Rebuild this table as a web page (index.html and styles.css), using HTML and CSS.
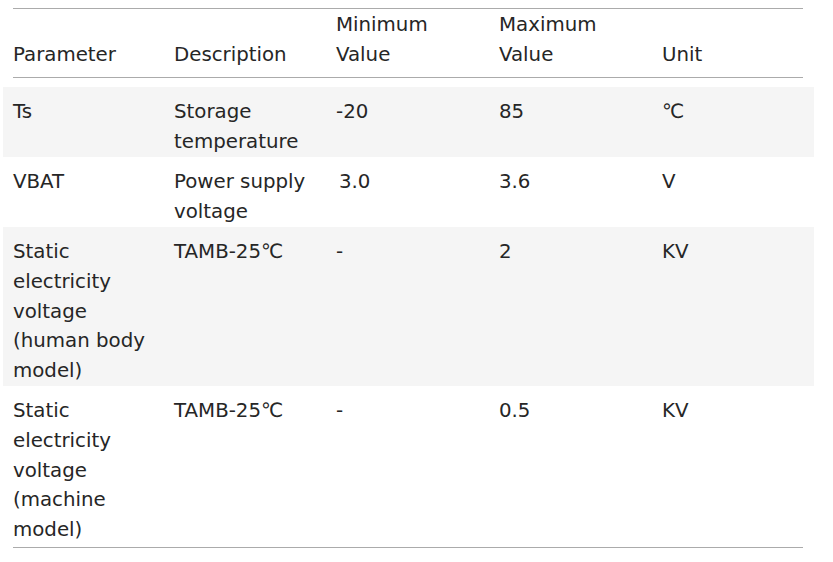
FILE: index.html
```html
<!DOCTYPE html>
<html lang="en">
<head>
<meta charset="utf-8">
<title>Parameters</title>
<link rel="stylesheet" href="styles.css">
</head>
<body>
<div class="table">
  <div class="head">
    <div class="cell">Parameter</div>
    <div class="cell">Description</div>
    <div class="cell">Minimum<br>Value</div>
    <div class="cell">Maximum<br>Value</div>
    <div class="cell">Unit</div>
  </div>
  <div class="row alt">
    <div class="cell">Ts</div>
    <div class="cell">Storage<br>temperature</div>
    <div class="cell">-20</div>
    <div class="cell">85</div>
    <div class="cell">℃</div>
  </div>
  <div class="row">
    <div class="cell">VBAT</div>
    <div class="cell">Power supply<br>voltage</div>
    <div class="cell indent">3.0</div>
    <div class="cell">3.6</div>
    <div class="cell">V</div>
  </div>
  <div class="row alt">
    <div class="cell">Static<br>electricity<br>voltage<br>(human body<br>model)</div>
    <div class="cell">TAMB-25℃</div>
    <div class="cell">-</div>
    <div class="cell">2</div>
    <div class="cell">KV</div>
  </div>
  <div class="row last">
    <div class="cell">Static<br>electricity<br>voltage<br>(machine<br>model)</div>
    <div class="cell">TAMB-25℃</div>
    <div class="cell">-</div>
    <div class="cell">0.5</div>
    <div class="cell">KV</div>
  </div>
  <div class="rule"></div>
</div>
</body>
</html>
```

FILE: styles.css
```css
html, body {
  margin: 0;
  padding: 0;
  background: #ffffff;
}

body {
  font-family: "DejaVu Sans", Verdana, sans-serif;
  font-size: 19.8px;
  line-height: 29.7px;
  color: #262626;
}

.table {
  padding-top: 8px;
}

.head,
.row {
  display: grid;
  grid-template-columns: 161px 162px 163px 163px 1fr;
}

.head {
  margin: 0 30px 0 13px;
  border-top: 1px solid #ababab;
  border-bottom: 1px solid #ababab;
  padding: 1px 0 8px 0;
  align-items: end;
}

.row {
  width: 801px;
  margin-left: 3px;
  padding: 10px 0 0.5px 10px;
}

.head + .row {
  margin-top: 9px;
}

.row.alt {
  background: #f5f5f5;
}

.row.last {
  padding-bottom: 2px;
}

.cell.indent {
  padding-left: 3px;
}

.rule {
  margin: 0 30px 0 13px;
  border-top: 1px solid #ababab;
}
```
